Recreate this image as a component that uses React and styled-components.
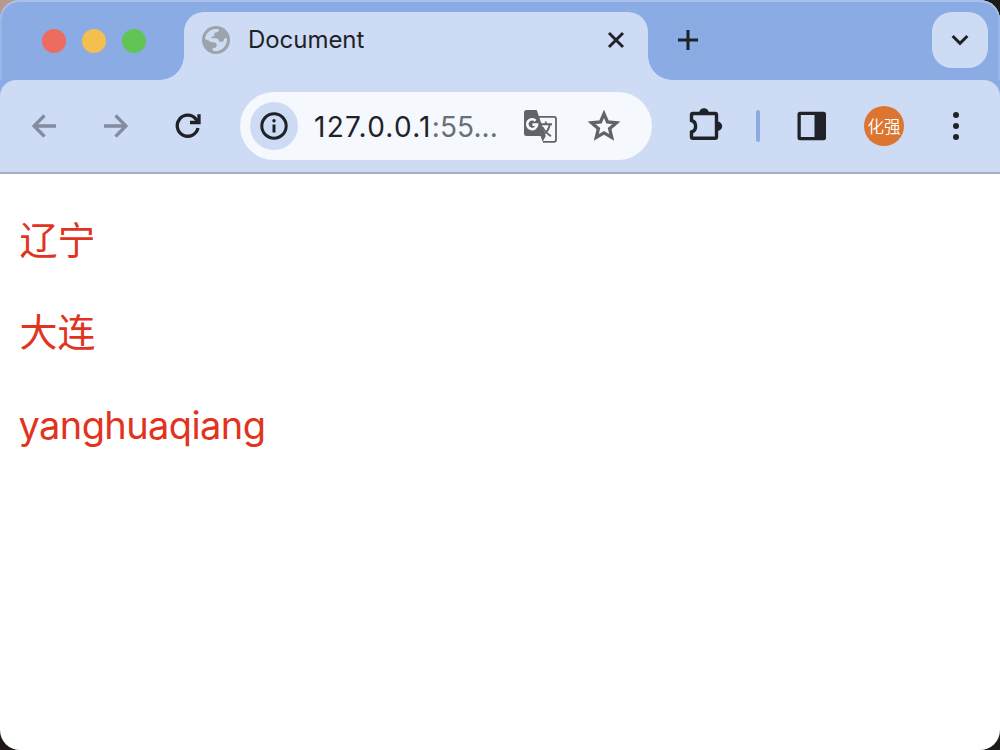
import React from 'react';
import styled, { createGlobalStyle } from 'styled-components';

const GlobalStyle = createGlobalStyle`
  *, *::before, *::after { box-sizing: border-box; }
  html, body { margin: 0; padding: 0; }
  body {
    background: #1d1b19;
    overflow: hidden;
  }
`;

const Backdrop = styled.div`
  width: 1000px;
  height: 750px;
  background: linear-gradient(#b89a90 0 16px, #1d1815 40px) 0 0 / 20px 100% no-repeat, #1d1b19;
`;

const Window = styled.div`
  display: flex;
  flex-direction: column;
  width: 1000px;
  height: 750px;
  border-radius: 20px;
  overflow: hidden;
  background: #fff;
`;

const TabStrip = styled.div`
  flex: none;
  display: flex;
  align-items: flex-start;
  height: 80px;
  padding: 12px 12px 0 42px;
  border-radius: 20px 20px 0 0;
  background: #8babe5;
  box-shadow: inset 0 2px #a9c0ec, inset 2px 0 #9ab6e9, inset -2px 0 #9ab6e9;
`;

const Lights = styled.div`
  display: flex;
  gap: 16px;
  width: 142px;
  padding-top: 17px;
`;

const Light = styled.span`
  width: 24px;
  height: 24px;
  border-radius: 50%;
  background: ${(p) => p.$color};
`;

const Tab = styled.div`
  position: relative;
  display: flex;
  align-items: center;
  width: 464px;
  height: 68px;
  padding: 0 22px 12px 18px;
  border-radius: 20px 20px 0 0;
  background: #cedbf4;

  &::before, &::after {
    content: '';
    position: absolute;
    bottom: 0;
    width: 24px;
    height: 24px;
  }
  &::before {
    right: 100%;
    background: radial-gradient(circle at 0 0, transparent 23.5px, #cedbf4 24px);
  }
  &::after {
    left: 100%;
    background: radial-gradient(circle at 100% 0, transparent 23.5px, #cedbf4 24px);
  }
`;

const TabTitle = styled.span`
  flex: 1;
  margin-left: 18px;
  font: 400 24px/28px Inter, sans-serif;
  letter-spacing: -0.05px;
  color: #1f2228;
`;

const NewTab = styled.div`
  display: flex;
  margin: 18px 0 0 30px;
`;

const TabSearch = styled.div`
  display: grid;
  place-items: center;
  width: 56px;
  height: 56px;
  margin-left: auto;
  border-radius: 20px;
  background: #cedbf4;
`;

const ToolbarBed = styled.div`
  flex: none;
  background: #8babe5;
`;

const Toolbar = styled.div`
  display: flex;
  align-items: center;
  height: 94px;
  padding: 0 32px;
  border-bottom: 2px solid #a6aec6;
  border-radius: 16px 16px 0 0;
  background: #cedbf4;
`;

const Slot = styled.div`
  display: flex;
  flex: none;
  margin-left: ${(p) => p.$gap || 0}px;
`;

const AddressBar = styled.div`
  display: flex;
  align-items: center;
  width: 412px;
  height: 68px;
  margin-left: 39px;
  padding-left: 10px;
  border-radius: 34px;
  background: #f5f8fd;
`;

const SiteInfo = styled.div`
  display: grid;
  place-items: center;
  width: 48px;
  height: 48px;
  border-radius: 50%;
  background: #cedbf4;
`;

const Url = styled.span`
  width: 184px;
  margin-left: 16px;
  padding-top: 1px;
  font: 400 28px/34px Inter, sans-serif;
  letter-spacing: 0.1px;
  white-space: nowrap;
  color: #6a6f77;
`;

const Host = styled.span`
  letter-spacing: 1.25px;
  color: #1f2228;
`;

const Divider = styled.span`
  width: 4px;
  height: 32px;
  margin-left: 33px;
  border-radius: 2px;
  background: #8babe5;
`;

const Avatar = styled.div`
  display: grid;
  place-items: center;
  width: 40px;
  height: 40px;
  margin-left: 37px;
  border-radius: 50%;
  background: #dc752f;
  color: #fff;
  font: 350 16.5px/20px "Noto Sans CJK SC", sans-serif;
  white-space: nowrap;
`;

const Page = styled.main`
  flex: 1;
  display: flex;
  flex-direction: column;
  gap: 37px;
  padding: 39px 19.5px 0;
`;

const Line = styled.p`
  margin: 0;
  color: #e1341e;
  font: 400 38px/55px Inter, "Noto Sans CJK SC", sans-serif;
`;

const LatinLine = styled(Line)`
  margin-top: 1px;
  margin-left: -1px;
  font-weight: 420;
  letter-spacing: -0.6px;
`;

const GlobeIcon = () => (
  <svg width="28" height="28" viewBox="0 0 28 28">
    <circle cx="14" cy="14" r="14" fill="#9ca4a9" />
    <path d="M3 13.300C3.200 8 7.500 3.300 13.500 3c1.200 0 2.500.1 3.600.5-.2 1.600-1 2.500-2.600 2.700-1.600.2-2.200.9-2.100 2.500 0 1.200-.6 1.700-1.800 1.800-1 .1-1.300.7-1.200 1.800h3.800c2.700 0 3.900 1.300 4 3.500h3c1.200 0 1.600-.7 1.700-2 .1-1.200.8-1.600 3-1.500.6 7-4.600 12.900-11 12.900-1.200 0-2.200-.2-3.200-.5v-2.600c2.700 0 4-1 4-3.200 0-1.800-1.300-2.400-3.500-2.600L9.300 16C7 15.800 6.500 13.500 3 13.300z" fill="#cedbf4" />
  </svg>
);

const CloseIcon = () => (
  <svg width="20" height="20" viewBox="0 0 20 20" fill="none" stroke="#1f2228" strokeWidth="2.900">
    <path d="M3 3l14 14M17 3L3 17" />
  </svg>
);

const PlusIcon = () => (
  <svg width="20" height="20" viewBox="0 0 20 20" fill="none" stroke="#1f2228" strokeWidth="3">
    <path d="M10 0v20M0 10h20" />
  </svg>
);

const ChevronIcon = () => (
  <svg width="18" height="12" viewBox="0 0 18 12" fill="none" stroke="#1f2228" strokeWidth="3">
    <path d="M1.600 2L9 9.300 16.400 2" />
  </svg>
);

const ArrowIcon = ({ flip }) => (
  <svg width="24" height="24" viewBox="0 0 24 24" fill="none" stroke="#838ba0" strokeWidth="3.300">
    <path d={flip ? 'M0 12h22M11.500 1.500L22 12 11.500 22.500' : 'M24 12H2M12.500 1.500L2 12l10.500 10.500'} />
  </svg>
);

const ReloadIcon = () => (
  <svg width="26" height="26" viewBox="0 0 26 26" fill="none" stroke="#1f2228" strokeWidth="3.300">
    <path d="M23 15A10.500 10.500 0 1 1 21 6.200L24 9" />
    <path d="M15 9.500h9V1.200" />
    <path d="M19 9.500L24 4.500V9.500z" fill="#1f2228" stroke="none" />
  </svg>
);

const InfoIcon = () => (
  <svg width="28" height="28" viewBox="0 0 28 28" fill="none" stroke="#1f2228" strokeWidth="3">
    <circle cx="14" cy="14" r="12.200" />
    <path d="M14 12.500V20.500" />
    <circle cx="14" cy="8.700" r="1.700" fill="#1f2228" stroke="none" />
  </svg>
);

const TranslateIcon = () => (
  <svg width="33" height="33" viewBox="0 0 33 33" fill="none">
    <path d="M14.500 6.800H30a2 2 0 0 1 2 2V29.800a2 2 0 0 1-2 2H19" stroke="#606368" strokeWidth="1.800" />
    <path d="M2.500 0h10.200l1.900 5.600 7.200 20.400-3.200 5.800-2-5.800H2.500A2.500 2.500 0 0 1 0 23.500v-21A2.500 2.500 0 0 1 2.500 0z" fill="#606368" />
    <path d="M17 14.200h11M21.800 11.500v2.700M25.800 14.500c-.8 4.500-3.300 8-6.800 10M18.500 17c1.500 3.500 4.500 6.500 8.500 9.300" stroke="#606368" strokeWidth="1.900" />
    <path d="M11.600 10.700A4.900 4.900 0 1 0 13 14.600H8.500" stroke="#f5f8fd" strokeWidth="2.700" />
  </svg>
);

const StarIcon = () => (
  <svg width="34" height="32" viewBox="0 0 34 32" fill="none" stroke="#606368" strokeWidth="3.300">
    <path d="M17 3.800l3.500 8.200 8.900.8-6.800 5.900 2.100 8.700-7.700-4.600-7.700 4.600 2.100-8.700-6.800-5.900 8.900-.8z" />
  </svg>
);

const PuzzleIcon = () => (
  <svg width="34" height="36" viewBox="0 1 34 36">
    <path d="M10.200 6a4.800 4.800 0 0 1 9.600 0zM28.500 14.500a4.700 4.700 0 0 1 0 9.400z" fill="#1f2228" />
    <path d="M4.500 6.500H26a1.500 1.500 0 0 1 1.500 1.500V29.700a1.500 1.500 0 0 1-1.500 1.500H4a1.500 1.500 0 0 1-1.500-1.500V25c5.500-1.500 5.500-10 0-11.500V8A1.500 1.500 0 0 1 4 6.500z" fill="none" stroke="#1f2228" strokeWidth="3.400" />
  </svg>
);

const PanelIcon = () => (
  <svg width="30" height="30" viewBox="0 0 30 30">
    <path fillRule="evenodd" d="M3 .8h23.500a2.500 2.500 0 0 1 2.500 2.500v23.500a2.500 2.500 0 0 1-2.500 2.500H3A2.500 2.500 0 0 1 .5 26.800V3.300A2.500 2.500 0 0 1 3 .8zM3.800 4.100v21.900h13.700V4.100z" fill="#1f2228" />
  </svg>
);

const MenuIcon = () => (
  <svg width="6" height="28" viewBox="0 0 6 28" fill="#1f2228">
    <circle cx="3" cy="3" r="3" />
    <circle cx="3" cy="14" r="3" />
    <circle cx="3" cy="25" r="3" />
  </svg>
);

export default function App() {
  return (
    <Backdrop>
      <GlobalStyle />
      <Window>
        <TabStrip>
          <Lights>
            <Light $color="#ee6b60" />
            <Light $color="#f5bf4f" />
            <Light $color="#61c454" />
          </Lights>
          <Tab>
            <GlobeIcon />
            <TabTitle>Document</TabTitle>
            <CloseIcon />
          </Tab>
          <NewTab><PlusIcon /></NewTab>
          <TabSearch><ChevronIcon /></TabSearch>
        </TabStrip>
        <ToolbarBed>
          <Toolbar>
            <Slot><ArrowIcon /></Slot>
            <Slot $gap={48}><ArrowIcon flip /></Slot>
            <Slot $gap={47}><ReloadIcon /></Slot>
            <AddressBar>
              <SiteInfo><InfoIcon /></SiteInfo>
              <Url><Host>127.0.0.1</Host>:55...</Url>
              <Slot $gap={26}><TranslateIcon /></Slot>
              <Slot $gap={30}><StarIcon /></Slot>
            </AddressBar>
            <Slot $gap={37}><PuzzleIcon /></Slot>
            <Divider />
            <Slot $gap={37}><PanelIcon /></Slot>
            <Avatar>化强</Avatar>
            <Slot $gap={49}><MenuIcon /></Slot>
          </Toolbar>
        </ToolbarBed>
        <Page>
          <Line>辽宁</Line>
          <Line>大连</Line>
          <LatinLine>yanghuaqiang</LatinLine>
        </Page>
      </Window>
    </Backdrop>
  );
}
